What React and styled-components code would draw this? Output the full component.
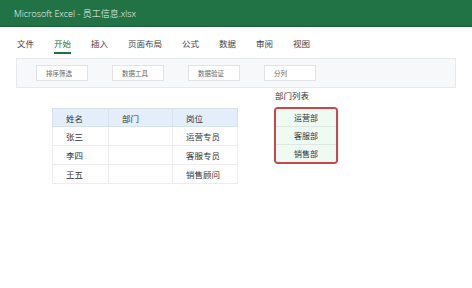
import React from "react";
import styled, { createGlobalStyle } from "styled-components";

const GlobalStyle = createGlobalStyle`
  html, body {
    margin: 0;
    padding: 0;
    background: #fff;
  }
  body {
    font-family: "Noto Sans CJK SC", "Noto Sans", sans-serif;
    color: #333;
  }
`;

const tabs = ["文件", "开始", "插入", "页面布局", "公式", "数据", "审阅", "视图"];
const tools = ["排序筛选", "数据工具", "数据验证", "分列"];
const people = [
  { name: "张三", dept: "", job: "运营专员" },
  { name: "李四", dept: "", job: "客服专员" },
  { name: "王五", dept: "", job: "销售顾问" },
];
const depts = ["运营部", "客服部", "销售部"];

const App = () => {
  return (
    <>
      <GlobalStyle />
      <Page>
        <TitleBar>Microsoft Excel - 员工信息.xlsx</TitleBar>
        <TabRow>
          {tabs.map((t) => (
            <Tab key={t} active={t === "开始"}>
              {t}
            </Tab>
          ))}
        </TabRow>
        <Ribbon>
          {tools.map((t) => (
            <ToolButton key={t}>{t}</ToolButton>
          ))}
        </Ribbon>
        <Sheet>
          <Table>
            <thead>
              <tr>
                <Th>姓名</Th>
                <Th>部门</Th>
                <Th>岗位</Th>
              </tr>
            </thead>
            <tbody>
              {people.map((p) => (
                <tr key={p.name}>
                  <Td>{p.name}</Td>
                  <Td>{p.dept}</Td>
                  <Td>{p.job}</Td>
                </tr>
              ))}
            </tbody>
          </Table>
          <DeptPanel>
            <DeptTitle>部门列表</DeptTitle>
            <DeptBox>
              {depts.map((d) => (
                <DeptCell key={d}>{d}</DeptCell>
              ))}
            </DeptBox>
          </DeptPanel>
        </Sheet>
      </Page>
    </>
  );
};

const Page = styled.div`
  width: 472px;
  height: 288px;
  display: flex;
  flex-direction: column;
  overflow: hidden;
`;

const TitleBar = styled.div`
  height: 27px;
  background: #217346;
  color: #f2f7f4;
  font-family: "Open Sans", "Noto Sans CJK SC", sans-serif;
  font-size: 9px;
  font-weight: 300;
  display: flex;
  align-items: center;
  padding-left: 14px;
  box-sizing: border-box;
  border-bottom: 1px solid #1b5e3a;
`;

const TabRow = styled.div`
  height: 30px;
  display: flex;
  align-items: center;
  padding-left: 7px;
  box-sizing: border-box;
`;

const Tab = styled.div`
  font-size: 8.5px;
  padding: 2px 10px 0;
  height: 22px;
  display: flex;
  align-items: center;
  position: relative;
  color: ${(p) => (p.active ? "#217346" : "#444")};
  &::after {
    content: "";
    display: ${(p) => (p.active ? "block" : "none")};
    position: absolute;
    left: 10px;
    right: 10px;
    bottom: 0;
    height: 2px;
    background: #217346;
  }
`;

const Ribbon = styled.div`
  margin: 1px 16px 0;
  height: 30px;
  background: #f7f8fa;
  border: 1px solid #e6e8eb;
  box-sizing: border-box;
  display: flex;
  align-items: center;
  gap: 24px;
  padding-left: 19px;
`;

const ToolButton = styled.div`
  width: 52px;
  height: 16px;
  background: #fff;
  border: 1px solid #e1e3e6;
  box-sizing: border-box;
  font-size: 6.5px;
  color: #666;
  display: flex;
  align-items: center;
  padding-left: 9px;
`;

const Sheet = styled.div`
  display: flex;
  align-items: flex-start;
  padding: 1px 0 0 52px;
  gap: 36px;
`;

const Table = styled.table`
  border-collapse: collapse;
  margin-top: 19px;
  font-size: 8.5px;
  color: #333;
  & th:nth-child(1), & td:nth-child(1) {
    width: 56px;
  }
  & th:nth-child(2), & td:nth-child(2) {
    width: 64px;
  }
  & th:nth-child(3), & td:nth-child(3) {
    width: 65px;
  }
`;

const Th = styled.th`
  height: 18px;
  background: #e3eefa;
  border: 1px solid #d8e2ee;
  font-weight: normal;
  text-align: left;
  padding: 0 0 0 13px;
  box-sizing: border-box;
`;

const Td = styled.td`
  height: 19px;
  border: 1px solid #ececec;
  padding: 0 0 0 13px;
  box-sizing: border-box;
`;

const DeptPanel = styled.div`
  display: flex;
  flex-direction: column;
  gap: 6px;
`;

const DeptTitle = styled.div`
  font-size: 8.5px;
  color: #333;
  padding-left: 1px;
  height: 12px;
  line-height: 12px;
`;

const DeptBox = styled.div`
  width: 64px;
  border: 2px solid #c8474c;
  border-radius: 4px;
  box-sizing: border-box;
  overflow: hidden;
  display: flex;
  flex-direction: column;
`;

const DeptCell = styled.div`
  height: 17px;
  background: #effaf2;
  font-size: 8px;
  color: #333;
  display: flex;
  align-items: center;
  justify-content: center;
  & + & {
    border-top: 1px solid #dfe7e1;
  }
`;

export default App;
